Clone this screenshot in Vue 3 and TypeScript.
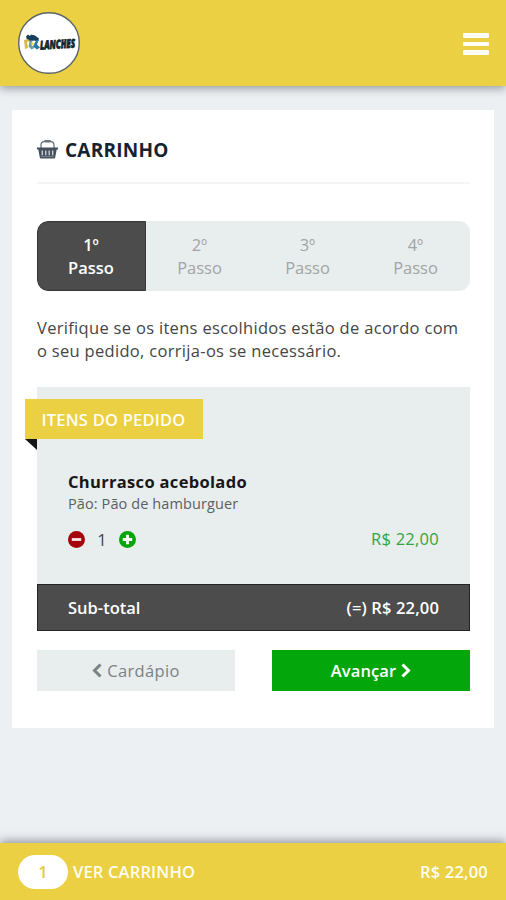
<script setup lang="ts">
interface CartItem {
  name: string
  detail: string
  quantity: number
  price: number
}

const steps: string[] = ['1º', '2º', '3º', '4º']
const activeStep = 0
const items: CartItem[] = [
  { name: 'Churrasco acebolado', detail: 'Pão: Pão de hamburguer', quantity: 1, price: 22 },
]
const total = items.reduce((sum, item) => sum + item.price * item.quantity, 0)
const count = items.reduce((sum, item) => sum + item.quantity, 0)
const money = (value: number): string => 'R$ ' + value.toFixed(2).replace('.', ',')
</script>

<template>
  <div class="page">
    <header class="topbar">
      <svg class="logo" viewBox="0 0 62 62" role="img">
        <circle cx="31" cy="31" r="30.3" fill="#fff" stroke="#5b646b" stroke-width="1.4" />
        <path d="M8 24.5l2-2 2 1.5 1-1.5 4 1 4 3-1 3-4-1-4 1-3-2z" fill="#173f5c" />
        <path d="M6 28l4-1 2 2-3 1 1 6-3 1z" fill="#d8b944" />
        <path d="M11.5 29l3-1-1 5 3 3-3 1.5-3-3z" fill="#719d9e" />
        <path d="M13 30l3 1-1 3z" fill="#f2d63c" />
        <path d="M18 28.5l3-1-2 5 3 3-3 2-4-3z" fill="#2378ad" />
        <text x="22" y="36.5" class="logo-text" textLength="35" lengthAdjust="spacingAndGlyphs" transform="rotate(-3 40 31)">LANCHES</text>
      </svg>
      <button class="menu" type="button">
        <span></span><span></span><span></span>
      </button>
    </header>

    <main class="card">
      <h1 class="title">
        <svg class="basket" viewBox="0 0 21 20">
          <path d="M4 9V5.5Q4.3 3 7 2.5M17 9V5.5Q16.7 3 14 2.5" fill="none" stroke="#6c7780" stroke-width="1.3" />
          <rect x="7" y="1" width="7" height="2.4" rx="1" fill="#69747d" />
          <path d="M0 8.5h21v2h-1.3l-1.5 8q-.2 1-1.2 1H4q-1 0-1.2-1l-1.5-8H0z" fill="#44515d" />
          <path d="M5.3 11.5v4.7M8.8 11.5v4.7M12.2 11.5v4.7M15.7 11.5v4.7" stroke="#dfe4e8" stroke-width="1.2" />
          <path d="M4 17.6h13" stroke="#8e979f" stroke-width=".7" />
        </svg>
        <span>CARRINHO</span>
      </h1>

      <ol class="steps">
        <li v-for="(step, i) in steps" :key="step" :class="{ active: i === activeStep }">
          <span>{{ step }}</span><span>Passo</span>
        </li>
      </ol>

      <p class="intro">Verifique se os itens escolhidos estão de acordo com<br />o seu pedido, corrija-os se necessário.</p>

      <section class="order">
        <h2 class="ribbon"><span>ITENS DO PEDIDO</span></h2>
        <article v-for="item in items" :key="item.name" class="item">
          <h3>{{ item.name }}</h3>
          <p class="detail">{{ item.detail }}</p>
          <div class="line">
            <div class="quantity">
              <svg viewBox="0 0 18 18"><circle cx="9" cy="9" r="9" fill="#a5040b" /><path d="M4 9h10" stroke="#f4e4e5" stroke-width="3" /></svg>
              <span>{{ item.quantity }}</span>
              <svg viewBox="0 0 18 18"><circle cx="9" cy="9" r="9" fill="#06a40b" /><path d="M4 9h10M9 4v10" stroke="#fff" stroke-width="3" /></svg>
            </div>
            <span class="price">{{ money(item.price) }}</span>
          </div>
        </article>
        <div class="subtotal"><span class="sub-label">Sub-total</span><span class="sub-price">(=) {{ money(total) }}</span></div>
      </section>

      <div class="actions">
        <button type="button" class="back">
          <svg viewBox="0 0 10 15"><path d="M8.5 1.5l-6 6 6 6" fill="none" stroke="currentColor" stroke-width="3" /></svg>
          <span>Cardápio</span>
        </button>
        <button type="button" class="next">
          <span>Avançar</span>
          <svg viewBox="0 0 10 15"><path d="M1.5 1.5l6 6-6 6" fill="none" stroke="currentColor" stroke-width="3" /></svg>
        </button>
      </div>
    </main>

    <footer class="cartbar">
      <span class="badge">{{ count }}</span>
      <span class="view">VER CARRINHO</span>
      <span class="total">{{ money(total) }}</span>
    </footer>
  </div>
</template>

<style>
body { margin: 0; background: #ecf0f3; }
</style>

<style scoped>
* { box-sizing: border-box; }
h1, h2, h3, p, ol { margin: 0; padding: 0; }
button { border: 0; padding: 0; font: inherit; }
svg { display: block; flex: none; }
.page {
  height: 900px;
  display: flex;
  flex-direction: column;
  overflow: hidden;
  background: #ecf0f3;
  color: #454545;
  font-family: "Open Sans", "Noto Sans", sans-serif;
  font-size: 16.5px;
  line-height: 23.5px;
}
.topbar {
  height: 86px;
  flex: none;
  display: flex;
  align-items: center;
  justify-content: space-between;
  padding: 0 17px 0 18px;
  background: #ebd043;
  box-shadow: 0 2px 9px rgba(50, 55, 70, .5);
}
.logo { width: 62px; height: 62px; overflow: visible; }
.logo-text { font: italic 800 12px/12px "Open Sans", sans-serif; fill: #10242c; stroke: #10242c; stroke-width: .8px; }
.menu { display: flex; flex-direction: column; gap: 4px; margin-top: 2px; background: none; }
.menu span { width: 26px; height: 4.5px; border-radius: 1px; background: #fffef4; }
.card {
  height: 618px;
  flex: none;
  margin: 24px 12px 0;
  padding: 25px 24px 0 25px;
  background: #fff;
}
.title {
  display: flex;
  align-items: center;
  gap: 7px;
  height: 49px;
  padding-bottom: 18px;
  border-bottom: 2px solid #f4f5f6;
  color: #152330;
  font-size: 19px;
  font-weight: 700;
  letter-spacing: .25px;
}
.title span { padding-top: 2px; }
.basket { width: 21px; height: 20px; margin-bottom: 2px; }
.steps {
  display: grid;
  grid-template-columns: 109px repeat(3, 1fr);
  height: 70px;
  margin-top: 37px;
  border-radius: 11px;
  overflow: hidden;
  list-style: none;
  background: #e8edee;
  color: #a1a5a6;
  text-align: center;
}
.steps li { display: flex; flex-direction: column; padding: 12px 1px 0 0; line-height: 23px; }
.steps .active { background: #4c4c4c; border: 1px solid #363636; border-radius: 11px 0 0 11px; padding-top: 11px; color: #fff; font-weight: 600; }
.intro { margin-top: 25px; letter-spacing: .31px; line-height: 23px; white-space: nowrap; }
.order { margin-top: 25px; height: 244px; background: #e8edee; display: flex; flex-direction: column; }
.ribbon {
  position: relative;
  width: 178px;
  height: 40px;
  flex: none;
  margin: 12px 0 0 -12px;
  padding-left: 16.5px;
  background: #ebd043;
  color: #fffef3;
  font-size: 16.5px;
  font-weight: 600;
  letter-spacing: .22px;
  line-height: 41px;
  white-space: nowrap;
}
.ribbon::after {
  content: "";
  position: absolute;
  top: 40px;
  left: 0;
  border-top: 11px solid #151515;
  border-left: 12px solid transparent;
}
.item { flex: 1; padding: 31px 31px 0; }
.item h3 { color: #171717; font-size: 16.5px; line-height: 23px; font-weight: 700; letter-spacing: .32px; }
.detail { color: #5b5f60; font-size: 14.5px; line-height: 21px; letter-spacing: .1px; }
.line { display: flex; justify-content: space-between; align-items: center; height: 24px; margin-top: 13px; }
.quantity { display: flex; align-items: center; gap: 12px; }
.quantity svg { width: 17px; height: 17px; margin-top: 1px; }
.quantity span { width: 10px; padding-top: 2px; text-align: center; }
.price { color: #32a63d; letter-spacing: .27px; }
.subtotal {
  display: flex;
  justify-content: space-between;
  align-items: center;
  height: 47px;
  padding: 0 30px;
  border: 1px solid #242424;
  background: #4c4c4c;
  color: #fff;
  font-weight: 600;
}
.sub-price { letter-spacing: .15px; }
.actions { display: grid; grid-template-columns: 1fr 1fr; gap: 37px; margin-top: 19px; }
.actions button { display: flex; justify-content: center; align-items: center; gap: 5px; height: 41px; }
.actions svg { width: 10px; height: 15px; }
.back { background: #e8edee; color: #7c8183; letter-spacing: .35px; }
.actions .next { background: #03a60b; color: #fff; font-weight: 600; letter-spacing: .1px; }
.cartbar {
  display: flex;
  align-items: center;
  height: 57px;
  flex: none;
  margin-top: auto;
  padding: 0 18px;
  background: #ebd043;
  box-shadow: 0 -2px 9px rgba(50, 55, 70, .5);
  color: #fffef0;
  font-weight: 600;
}
.badge { width: 50px; height: 34px; border-radius: 17px; background: #fff; color: #e5c94b; line-height: 34px; text-align: center; }
.view { margin-left: 5px; letter-spacing: .17px; }
.total { margin-left: auto; letter-spacing: .2px; }
</style>
